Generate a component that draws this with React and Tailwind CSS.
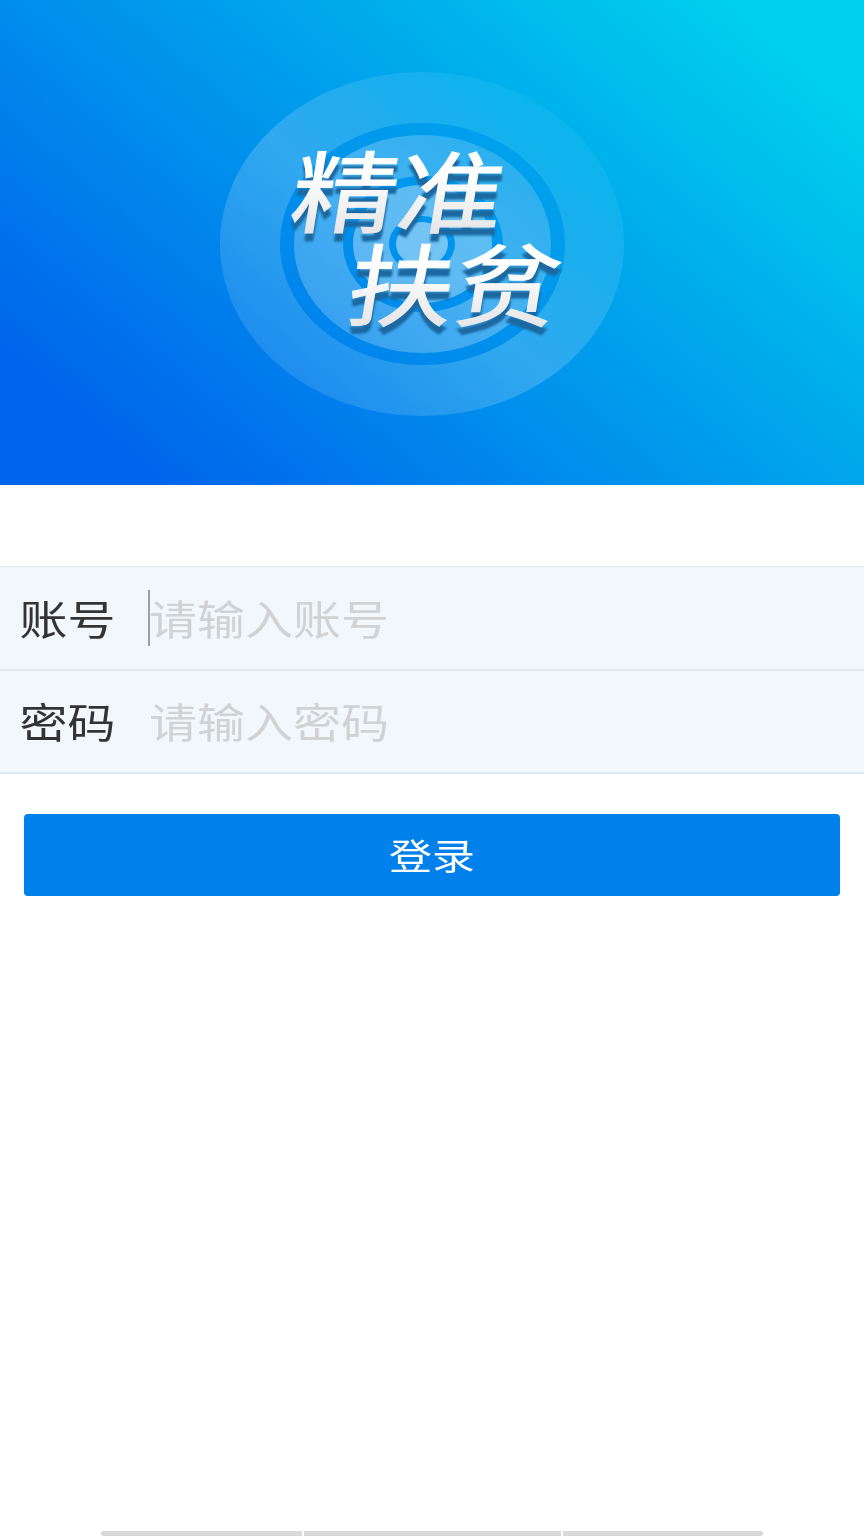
const FONT = "font-['Noto_Sans_CJK_SC',sans-serif]";

function Logo() {
  return (
    <svg viewBox="0 0 864 485" className="h-full w-full" aria-label="精准扶贫">
      <defs>
        <linearGradient id="outer" x1="0.1" y1="0.9" x2="0.9" y2="0.1">
          <stop offset="0" stopColor="#fff" stopOpacity="0.11" />
          <stop offset="0.45" stopColor="#fff" stopOpacity="0.19" />
          <stop offset="0.95" stopColor="#fff" stopOpacity="0.04" />
        </linearGradient>
        <linearGradient id="middle" x1="0.1" y1="0.9" x2="0.9" y2="0.1">
          <stop offset="0" stopColor="#fff" stopOpacity="0.22" />
          <stop offset="0.5" stopColor="#fff" stopOpacity="0.28" />
          <stop offset="1" stopColor="#fff" stopOpacity="0.16" />
        </linearGradient>
        <linearGradient id="ink" x1="0" y1="0" x2="0" y2="1">
          <stop offset="0.4" stopColor="#ffffff" />
          <stop offset="0.85" stopColor="#e6e6e8" />
        </linearGradient>
        <filter id="soft" x="-10%" y="-10%" width="120%" height="130%">
          <feGaussianBlur stdDeviation="0.8" />
        </filter>
      </defs>
      <path
        fillRule="evenodd"
        fill="url(#outer)"
        d="M220 244a202 172 0 1 0 404 0a202 172 0 1 0 -404 0ZM280 244a142.500 121 0 1 0 285 0a142.500 121 0 1 0 -285 0Z"
      />
      <ellipse cx="422.500" cy="244" rx="142.500" ry="121" fill="#0084f0" fillOpacity="0.2" />
      <path
        fillRule="evenodd"
        fill="url(#middle)"
        d="M294 244a128.500 109 0 1 0 257 0a128.500 109 0 1 0 -257 0ZM343 244a80 68 0 1 0 160 0a80 68 0 1 0 -160 0Z"
      />
      <path
        fillRule="evenodd"
        fill="#fff"
        fillOpacity="0.37"
        d="M353 244a69.500 59 0 1 0 139 0a69.500 59 0 1 0 -139 0ZM389 244a33 28 0 1 0 66 0a33 28 0 1 0 -66 0Z"
      />
      <ellipse cx="422" cy="244" rx="26" ry="22" fill="#fff" fillOpacity="0.45" />
      <g className="font-['Noto_Sans_CJK_SC',sans-serif] font-normal" fontSize="100" strokeWidth="1.3">
        <g fill="#1b68a0" stroke="#1b68a0" filter="url(#soft)">
          <text transform="matrix(1.06 0 -0.145 0.89 287 234)">精准</text>
          <text transform="matrix(1.06 0 -0.145 0.89 343.500 327)">扶贫</text>
        </g>
        <g fill="url(#ink)" stroke="url(#ink)">
          <text transform="matrix(1.06 0 -0.145 0.89 287 226)">精准</text>
          <text transform="matrix(1.06 0 -0.145 0.89 343.500 319)">扶贫</text>
        </g>
      </g>
    </svg>
  );
}

function Field({ label, placeholder, focused }) {
  return (
    <div className="flex h-[103.500px] items-center border-b-2 border-[#e2e8eb] pl-[19.500px]">
      <span className="mb-[2px] w-[128.500px] shrink-0 origin-center scale-y-[0.85] text-[48px] leading-[60px] text-[#333]">
        {label}
      </span>
      <span className={focused ? "h-14 w-0.5 shrink-0 bg-[#9da1a3]" : "h-14 w-0.5 shrink-0"} />
      <span className="-ml-px mb-[2px] scale-y-[0.85] whitespace-nowrap text-[48px] leading-[60px] text-[#d0d2d3]">
        {placeholder}
      </span>
    </div>
  );
}

export default function App() {
  return (
    <main className={`flex h-[1536px] w-[864px] flex-col overflow-hidden bg-white ${FONT}`}>
      <header className="h-[485px] shrink-0 bg-[linear-gradient(40.4deg,#0064ec_11%,#008bec_39%,#00a7ec_61%,#00d0ed_91%)]">
        <Logo />
      </header>
      <section className="mt-[81px] border-t border-[#dfe5e8] bg-[#f1f7fa]">
        <Field label="账号" placeholder="请输入账号" focused />
        <Field label="密码" placeholder="请输入密码" />
      </section>
      <button className="mx-6 mt-10 flex h-[81.500px] shrink-0 items-center justify-center rounded bg-[#0080eb] text-white">
        <span className="mb-[2px] scale-y-[0.85] text-[43px] leading-[60px]">登录</span>
      </button>
      <footer className="mt-auto ml-[101px] flex h-[5px] gap-0.5">
        <span className="w-[201px] rounded-l-sm bg-[#d9d9d9]" />
        <span className="w-[256.500px] bg-[#d9d9d9]" />
        <span className="w-[200px] rounded-r-sm bg-[#d9d9d9]" />
      </footer>
    </main>
  );
}
